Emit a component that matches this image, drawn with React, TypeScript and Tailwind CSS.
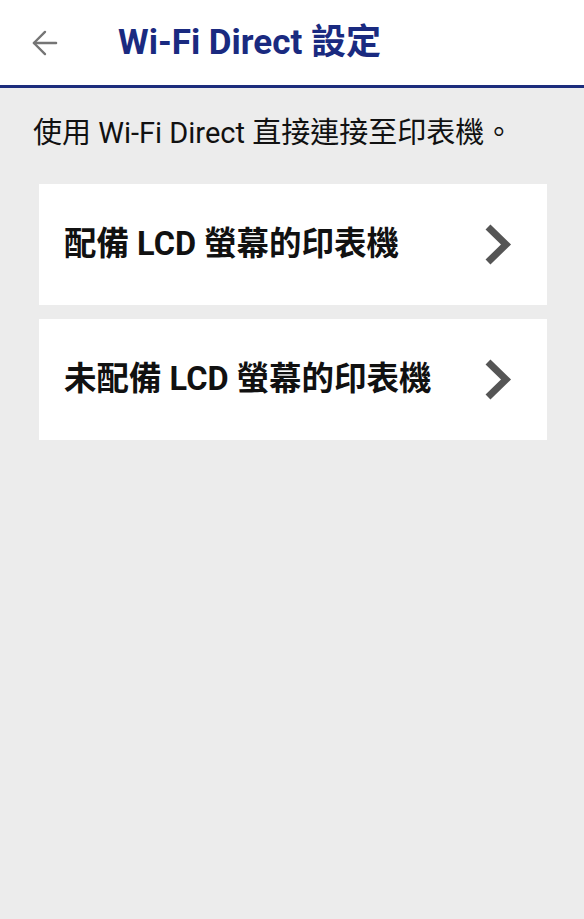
import { ArrowLeft } from "lucide-react";

const items = ["配備 LCD 螢幕的印表機", "未配備 LCD 螢幕的印表機"];

export default function App() {
  return (
    <div
      className="w-[584px] h-[919px] bg-[#ececec] flex flex-col"
      style={{ fontFamily: 'Roboto, "Noto Sans CJK TC", sans-serif' }}
    >
      {/* Header */}
      <div className="h-[88px] bg-white border-b-[3px] border-[#1c2c7c] flex items-center shrink-0">
        <ArrowLeft className="w-[38px] h-[38px] ml-[26px] text-[#757575]" strokeWidth={1.5} />
        <h1 className="ml-[54px] text-[35px] font-bold text-[#1a2a80] leading-none">Wi-Fi Direct 設定</h1>
      </div>

      <p className="mt-[25px] ml-[33px] text-[29px] text-[#111] leading-[40px]">
        使用 Wi-Fi Direct 直接連接至印表機。
      </p>

      <div className="mt-[31px] ml-[39px] w-[508px] flex flex-col gap-[14px]">
        {items.map((label) => (
          <div key={label} className="h-[121px] bg-white flex items-center justify-between pl-[25px] pr-[35px]">
            <span className="text-[32.5px] font-bold text-[#111]">{label}</span>
            <svg width="28" height="43" viewBox="0 0 28 43">
              <path d="M4 4 L22 21.5 L4 39" fill="none" stroke="#555" strokeWidth="7" strokeLinejoin="miter" />
            </svg>
          </div>
        ))}
      </div>
    </div>
  );
}
